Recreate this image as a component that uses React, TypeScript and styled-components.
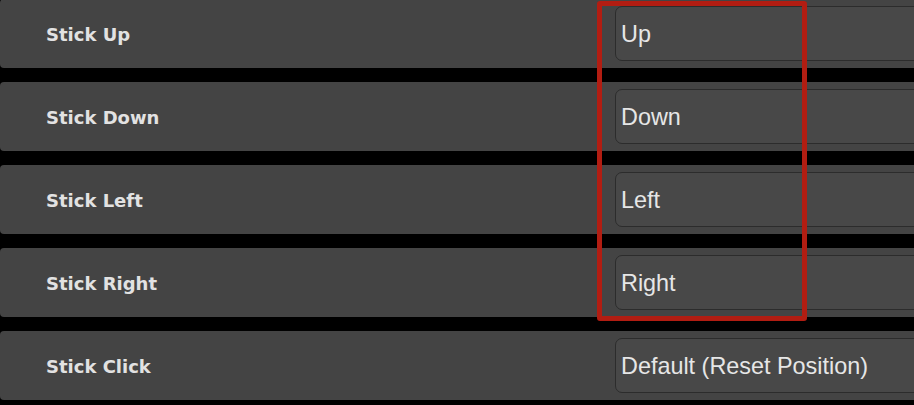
import React from "react";
import styled, { createGlobalStyle } from "styled-components";

const GlobalStyle = createGlobalStyle`
body {
  margin: 0;
  background-color: #000;
  overflow: hidden;
}
`;

const Page = styled.div`
  position: relative;
  width: 914px;
  height: 405px;
  overflow: hidden;
`;

const List = styled.div`
  display: flex;
  flex-direction: column;
  gap: 14px;
  margin-top: -1px;
`;

const Row = styled.div`
  display: flex;
  align-items: center;
  height: 69px;
  width: 960px;
  box-sizing: border-box;
  padding-left: 46px;
  background-color: #444444;
  border-radius: 4px;
`;

const Label = styled.div`
  width: 569px;
  padding-top: 2px;
  font-family: "DejaVu Sans", Verdana, sans-serif;
  font-weight: bold;
  font-size: 18px;
  color: #e2e2e2;
`;

const Field = styled.div`
  flex: 1;
  height: 55px;
  box-sizing: border-box;
  display: flex;
  align-items: center;
  padding-left: 5px;
  padding-top: 2px;
  background-color: #484848;
  border: 1px solid #2c2c2c;
  border-radius: 7px;
  font-family: "Liberation Sans", Arial, sans-serif;
  font-size: 23.4px;
  color: #e6e6e6;
`;

const Highlight = styled.div`
  position: absolute;
  left: 597px;
  top: 1px;
  width: 210px;
  height: 320px;
  box-sizing: border-box;
  border: 5px solid #b21d12;
  border-radius: 3px;
  pointer-events: none;
`;

const bindings = [
  { label: "Stick Up", value: "Up" },
  { label: "Stick Down", value: "Down" },
  { label: "Stick Left", value: "Left" },
  { label: "Stick Right", value: "Right" },
  { label: "Stick Click", value: "Default (Reset Position)" },
];

export default function App() {
  return (
    <Page>
      <GlobalStyle />
      <List>
        {bindings.map((b) => (
          <Row key={b.label}>
            <Label>{b.label}</Label>
            <Field>{b.value}</Field>
          </Row>
        ))}
      </List>
      <Highlight />
    </Page>
  );
}
